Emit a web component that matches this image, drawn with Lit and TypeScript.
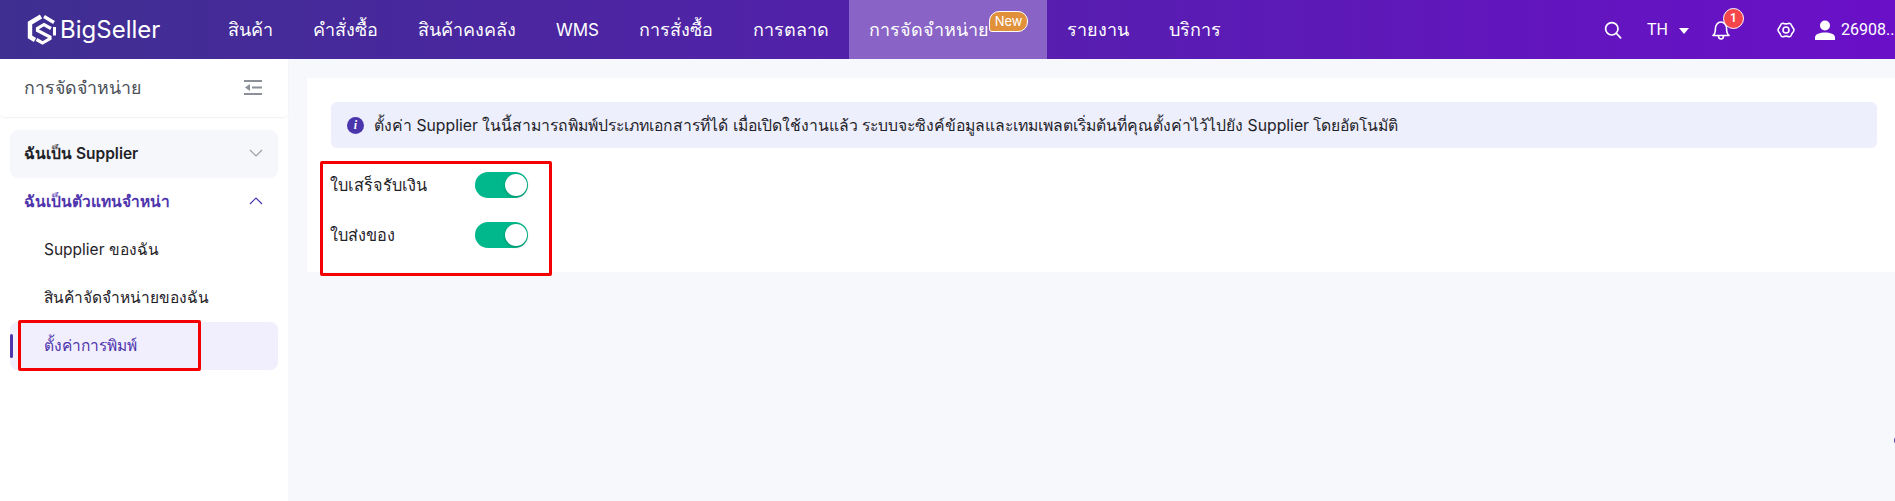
import { LitElement, html, css, svg } from 'lit';
import { customElement } from 'lit/decorators.js';

const NAV = ['สินค้า', 'คำสั่งซื้อ', 'สินค้าคงคลัง', 'WMS', 'การสั่งซื้อ', 'การตลาด'];

const logo = svg`<svg width="30" height="32" viewBox="0 0 30 32" fill="none" stroke="#fff" stroke-linejoin="miter">
  <path d="M14 2.5 L3 9 V23 L8 26" stroke-width="4.4"/>
  <path d="M17 2.5 L27 8.5" stroke-width="3.4"/>
  <path d="M24 14.5 L17 10.5 L10.5 14.5 V16.5 L23 23 V24.5 L15.5 29 L9.5 25.5" stroke-width="3.2"/>
  <path d="M27.5 13 V21.5" stroke-width="3"/>
</svg>`;

@customElement('app-root')
class AppRoot extends LitElement {
  static styles = css`
    :host {
      display: block;
      position: relative;
      height: 501px;
      overflow: hidden;
      background: #f7f8fb;
      font-family: Inter, "Noto Sans", sans-serif;
      font-size: 16px;
      color: #1f2329;
    }
    .topbar {
      display: flex;
      align-items: stretch;
      height: 59px;
      color: #fff;
      background: linear-gradient(90deg, #3f2f91 0%, #6a10c8 100%);
    }
    .brand {
      display: flex;
      align-items: center;
      gap: 3px;
      width: 208px;
      padding-left: 27px;
      box-sizing: border-box;
      font-size: 24px;
      line-height: 1;
    }
    .nav { display: flex; align-items: stretch; }
    .nav-item {
      display: flex;
      align-items: center;
      padding: 0 20px;
      font-size: 18px;
      white-space: nowrap;
    }
    .nav-item.latin { font-size: 17px; }
    .nav-item.on { background: #8963c6; padding-right: 19px; }
    .new-tag {
      align-self: flex-start;
      margin-top: 11px;
      width: 39px;
      height: 21px;
      box-sizing: border-box;
      border: 1px solid #fff;
      border-radius: 10px 10px 10px 3px;
      background: #e0913a;
      font-size: 13px;
      line-height: 18px;
      text-align: center;
    }
    .tools {
      margin-left: auto;
      display: flex;
      align-items: center;
      font-family: Roboto, sans-serif;
      font-size: 16px;
      white-space: nowrap;
    }
    .tools svg { display: block; }
    .search { margin-right: 25px; }
    .lang { display: flex; align-items: center; gap: 11px; margin-right: 23px; }
    .caret {
      width: 0;
      height: 0;
      border-left: 5px solid transparent;
      border-right: 5px solid transparent;
      border-top: 6px solid #fff;
      margin-top: 2px;
    }
    .bell { position: relative; margin-right: 47px; }
    .count {
      position: absolute;
      left: 11px;
      top: -12px;
      width: 21px;
      height: 21px;
      box-sizing: border-box;
      border: 1px solid #fff;
      border-radius: 50%;
      background: #f5474b;
      font-size: 12px;
      font-weight: 600;
      line-height: 19px;
      text-align: center;
    }
    .gear { margin-right: 20px; }
    .user {
      display: flex;
      align-items: center;
      gap: 6px;
      width: 80px;
    }

    .body { display: flex; height: 442px; }
    .side {
      flex: none;
      width: 288px;
      background: #fff;
    }
    .side-head {
      display: flex;
      align-items: center;
      justify-content: space-between;
      height: 58px;
      padding: 0 26px 0 24px;
      box-sizing: border-box;
      font-size: 17.8px;
      color: #4a4f57;
      border-radius: 0 0 4px 4px;
      box-shadow: 0 1px 2px rgba(0, 0, 0, 0.06);
    }
    .menu { padding: 13px 10px 0; }
    .row {
      display: flex;
      align-items: center;
      justify-content: space-between;
      height: 48px;
      padding-bottom: 2px;
      box-sizing: border-box;
      border-radius: 8px;
      font-size: 15.5px;
    }
    .group { padding-left: 14px; padding-right: 15px; font-weight: 600; }
    .group.closed { background: #f6f7fa; }
    .group.open { color: #4f35ad; }
    .leaf { padding-left: 34px; }
    .leaf.on { position: relative; background: #f1eefd; color: #4f35ad; }
    .leaf.on::before {
      content: '';
      position: absolute;
      left: 0;
      top: 12px;
      width: 3px;
      height: 24px;
      border-radius: 2px;
      background: #4f35ad;
    }

    .main { flex: 1; min-width: 0; padding: 19px 0 0 19px; }
    .panel {
      height: 194px;
      box-sizing: border-box;
      padding: 24px 18px 0 24px;
      background: #fff;
    }
    .notice {
      display: flex;
      align-items: center;
      gap: 10px;
      height: 46px;
      padding: 0 16px;
      border-radius: 6px;
      background: #edeffd;
      font-size: 15.75px;
      white-space: nowrap;
    }
    .info {
      flex: none;
      width: 17px;
      height: 17px;
      border-radius: 50%;
      background: #4b35ad;
      color: #fff;
      font: italic 700 12px/17px "Liberation Serif", serif;
      text-align: center;
    }
    .settings { padding-top: 24px; display: grid; gap: 24px; }
    .setting { display: flex; align-items: center; height: 26px; font-size: 16.3px; }
    .setting span { width: 144px; margin-left: -1px; margin-right: 1px; }
    .switch {
      position: relative;
      width: 53px;
      height: 26px;
      border-radius: 13px;
      background: #00b88b;
    }
    .switch::after {
      content: '';
      position: absolute;
      right: 1px;
      top: 2px;
      width: 22px;
      height: 22px;
      border-radius: 50%;
      background: #fff;
      box-shadow: 0 1px 3px rgba(0, 0, 0, 0.25);
    }

    .mark {
      position: absolute;
      box-sizing: border-box;
      border: 3px solid #f40000;
      border-radius: 2px;
      pointer-events: none;
    }
    .mark.one { left: 18px; top: 320px; width: 183px; height: 51px; }
    .mark.two { left: 320px; top: 161px; width: 232px; height: 115px; }
    .edge-dot {
      position: absolute;
      left: 1894px;
      top: 436px;
      width: 8px;
      height: 9px;
      border-radius: 50%;
      background: #5a3fb2;
    }
  `;

  render() {
    return html`
      <div class="topbar">
        <div class="brand">${logo}<span>BigSeller</span></div>
        <nav class="nav">
          ${NAV.map(label => html`<div class="nav-item ${label === 'WMS' ? 'latin' : ''}">${label}</div>`)}
          <div class="nav-item on">การจัดจำหน่าย<span class="new-tag">New</span></div>
          <div class="nav-item">รายงาน</div>
          <div class="nav-item">บริการ</div>
        </nav>
        <div class="tools">
          <svg class="search" width="18" height="18" viewBox="0 0 18 18" fill="none" stroke="#fff" stroke-width="1.7" stroke-linecap="round">
            <circle cx="7.8" cy="7.8" r="6.2"/><path d="M12.5 12.5 L16.6 16.8"/>
          </svg>
          <div class="lang"><span>TH</span><i class="caret"></i></div>
          <div class="bell">
            <svg width="18" height="20" viewBox="0 0 18 20" fill="none" stroke="#fff" stroke-width="1.6" stroke-linejoin="round">
              <path d="M1 15.5 C3 14 3.4 12 3.4 9 C3.4 5 5.8 2 9 2 C12.2 2 14.6 5 14.6 9 C14.6 12 15 14 17 15.5 Z"/>
              <path d="M6.5 16 C6.5 18 7.6 19 9 19 C10.4 19 11.5 18 11.5 16"/>
            </svg>
            <div class="count">1</div>
          </div>
          <svg class="gear" width="18" height="18" viewBox="0 0 18 18" fill="none" stroke="#fff" stroke-width="1.6" stroke-linejoin="round">
            <path d="M6 2.2 C7.5 2.9 10.5 2.9 12 2.2 C13.6 2 14.2 3.2 14.6 4.6 C15 5.8 17 7.4 17 9 C17 10.6 15 12.2 14.6 13.4 C14.2 14.8 13.6 16 12 15.8 C10.5 15.1 7.5 15.1 6 15.8 C4.4 16 3.8 14.8 3.4 13.4 C3 12.2 1 10.6 1 9 C1 7.4 3 5.8 3.4 4.6 C3.8 3.2 4.4 2 6 2.2 Z"/>
            <circle cx="9" cy="9" r="3"/>
          </svg>
          <div class="user">
            <svg style="flex:none" width="20" height="20" viewBox="0 0 20 20" fill="#fff">
              <circle cx="10" cy="5.5" r="5"/>
              <path d="M0 20 V17.5 C0 14 5 12.6 10 12.6 C15 12.6 20 14 20 17.5 V20 Z"/>
            </svg>
            <span>26908..</span>
          </div>
        </div>
      </div>
      <div class="body">
        <aside class="side">
          <div class="side-head">
            <span>การจัดจำหน่าย</span>
            <svg width="18" height="16" viewBox="0 0 18 16" fill="#8b9099">
              <rect y="0" width="18" height="2"/><rect y="13" width="18" height="2"/>
              <rect x="8" y="6.5" width="10" height="2"/><path d="M1 7.5 L6 4 V11 Z"/>
            </svg>
          </div>
          <div class="menu">
            <div class="row group closed">
              <span>ฉันเป็น Supplier</span>
              <svg width="14" height="8" viewBox="0 0 14 8" fill="none" stroke="#9a9fa8" stroke-width="1.2"><path d="M1 1 L7 7 L13 1"/></svg>
            </div>
            <div class="row group open">
              <span>ฉันเป็นตัวแทนจำหน่า</span>
              <svg width="14" height="8" viewBox="0 0 14 8" fill="none" stroke="#4f35ad" stroke-width="1.2"><path d="M1 7 L7 1 L13 7"/></svg>
            </div>
            <div class="row leaf">Supplier ของฉัน</div>
            <div class="row leaf">สินค้าจัดจำหน่ายของฉัน</div>
            <div class="row leaf on">ตั้งค่าการพิมพ์</div>
          </div>
        </aside>
        <main class="main">
          <section class="panel">
            <div class="notice">
              <span class="info">i</span>
              <span>ตั้งค่า Supplier ในนี้สามารถพิมพ์ประเภทเอกสารที่ได้ เมื่อเปิดใช้งานแล้ว ระบบจะซิงค์ข้อมูลและเทมเพลตเริ่มต้นที่คุณตั้งค่าไว้ไปยัง Supplier โดยอัตโนมัติ</span>
            </div>
            <div class="settings">
              <div class="setting"><span>ใบเสร็จรับเงิน</span><div class="switch"></div></div>
              <div class="setting"><span>ใบส่งของ</span><div class="switch"></div></div>
            </div>
          </section>
        </main>
      </div>
      <div class="mark one"></div>
      <div class="mark two"></div>
      <div class="edge-dot"></div>
    `;
  }
}

declare global {
  interface HTMLElementTagNameMap {
    'app-root': AppRoot;
  }
}
